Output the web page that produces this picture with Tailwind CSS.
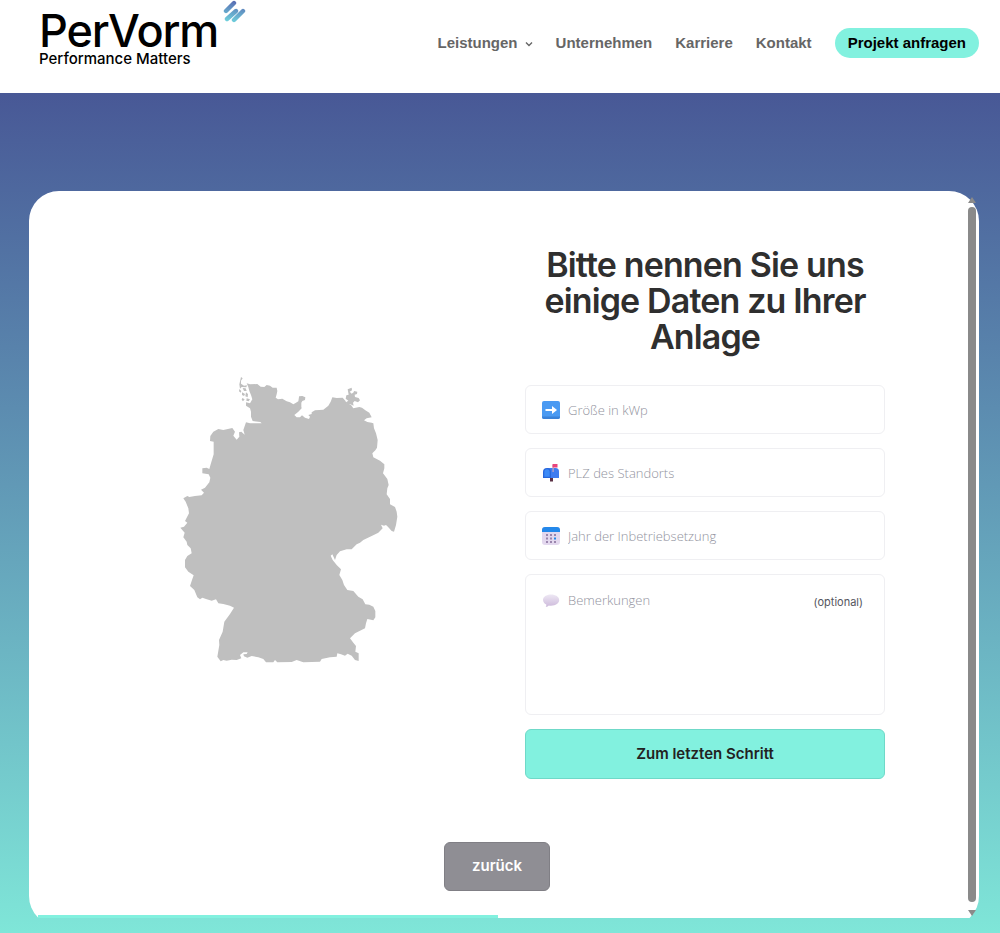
<!DOCTYPE html>
<html lang="de">
<head>
    <meta charset="UTF-8" />
    <meta name="viewport" content="width=device-width, initial-scale=1.0">
    <title>PerVorm - Projekt anfragen</title>
    <script src="https://cdn.jsdelivr.net/npm/@tailwindcss/browser@4"></script>
</head>
<body class="flex min-h-screen flex-col bg-white font-['Inter',sans-serif]">
    <header class="flex h-[93px] items-start justify-between pl-[39px] pr-[21px]">
        <a href="#" class="relative block pt-2 pr-7 text-black">
            <span class="block text-[45px] leading-[46px] font-medium tracking-tight">PerVorm</span>
            <span class="block text-[15px] leading-[10px] font-medium">Performance Matters</span>
            <svg class="absolute top-0 right-0 h-6 w-6" viewBox="0 0 24 24" fill="none" stroke="url(#logoGradient)" stroke-width="4.400" stroke-linecap="round">
                <defs>
                    <linearGradient id="logoGradient" gradientUnits="userSpaceOnUse" x1="14" y1="2" x2="10" y2="22">
                        <stop offset="0" stop-color="#5a6fb4" />
                        <stop offset="1" stop-color="#6fd0dc" />
                    </linearGradient>
                </defs>
                <path d="M4 11 12 3M5 19 14 11M12 20 21 11" />
            </svg>
        </a>
        <nav class="flex h-[86px] items-center gap-[23px] font-['Liberation_Sans',Arial,sans-serif] text-[15px] font-bold text-[#666]">
            <a href="#" class="flex items-center gap-[7px]">
                Leistungen
                <svg class="mt-[2px] h-2 w-2" viewBox="0 0 8 8" fill="none" stroke="currentColor" stroke-width="1.4"><path d="M1 2.5 4 5.5 7 2.5" /></svg>
            </a>
            <a href="#">Unternehmen</a>
            <a href="#">Karriere</a>
            <a href="#">Kontakt</a>
            <a href="#" class="flex h-[30px] items-center rounded-full bg-[#82f1df] px-[13px] text-black">Projekt anfragen</a>
        </nav>
    </header>

    <main class="flex-1 bg-linear-to-b from-[#485896] to-[#7fe6d8] pt-[98px] pr-[21px] pb-[15px] pl-[29px]">
        <div class="relative overflow-hidden">
            <div class="-mb-2 overflow-hidden rounded-[30px] bg-white pt-14 pr-[14px] pb-[35px]">
                <div class="grid grid-cols-2 gap-14 px-20">
                    <div class="flex items-center justify-center">
                        <!-- Deutschlandkarte -->
                        <svg class="mt-3 w-[219px]" viewBox="30 33 657 861" fill="#bfbfbf" role="img" aria-label="Deutschland">
                            <path d="M230 55 240 58 262 57 272 65 283 66 290 60 300 62 308 68 320 68 322 78 320 88 317 98 324 103 337 101 350 109 360 112 370 118 378 113 385 109 387 96
                            393 95 397 93 406 97 405 105 397 108 394 113 394 125 395 130 385 140 373 150 380 157 390 157 396 151 405 158 417 162 420 155 415 150 425 147 425 142 435 136 460 134 475 122 482 110 487 97 500 99 518 98 526 107 530 115 543 120 550 130 568 126 576 128 586 136 598 143 605 157 590 160 582 166 592 171 605 173 610 175
                            612 190 618 205 623 225 621 248 616 256 607 265 610 277 630 287 643 298 643 310 639 325 652 342 656 360 652 370 650 388 660 402 660 418 675 426 680 440
                            682 455 678 480 672 500 665 498 655 487 648 480 642 482 633 479 638 490 625 503 605 513 580 525 570 533 560 538 545 553 530 553 510 559 500 570 495 585 487 568 482 572 488 585 500 600 513 613 508 630 517 645 522 660 532 675 550 678 565 695 578 703 586 718 598 719 610 725 616 738 616 757 610 766 592 762 588 775 585 790 570 797 555 805 540 820 550 833 558 843 556 860 566 865 566 888 555 885 545 872 533 866 525 872 513 868 502 865 500 875 480 877 455 882 450 890 400 892 380 885 365 891 322 892 315 885 310 892 288 892
                            280 882 265 877 245 873 232 878 222 874 220 868 230 867 233 862 220 862 210 870 214 880 200 885 185 884 170 887 160 885 152 889 142 875 148 840 147 825 158 800 163 770 180 747 192 728 180 722 160 717 145 715 138 703 125 707 108 702 97 698 90 703 82 697 73 675 60 663 66 645 71 631 55 620 45 607 45 585 52 573 65 565 62 550 52 540 50 530 40 517 44 503 31 488 42 485 52 473 45 468 57 445
                            55 430 47 410 40 400 52 393 58 396 75 393 95 391 102 383 93 374 105 368 118 352 121 338 116 328 97 325 97 310 110 308 118 312 122 298 131 268 131 230 120 228 121 213 130 200 145 192 160 195 187 189 195 200 190 212 200 224 208 215 207 202 214 200 224 209 220 195 228 172 240 175 275 175 271 171 248 168 243 155 243 140 240 130 228 122 228 112 240 115 247 103 243 90 238 78 235 66Z" />
                            <path d="M387 94 398 93 389 104ZM213 36 218 40 213 47 213 56 222 62 231 61 229 67 215 66 210 71 208 58 211 45ZM208 72 214 78 212 83 207 79ZM218 69 227 70 230 78 222 78ZM216 82 225 87 222 93 216 90ZM228 82 234 87 233 97 226 94ZM217 99 224 103 219 109 215 104ZM230 100 240 103 236 109 229 107Z" />
                            <path d="M533 73 545 68 546 76 539 80 545 86 551 82 552 78 562 80 561 87 554 89 555 96 566 99 570 106 564 112 554 108 549 113 551 122 541 118 533 120 526 113 535 107 527 101 529 91 536 89Z" />
                        </svg>
                    </div>

                    <form class="flex flex-col gap-[14px]">
                        <h1 class="mb-4 text-center text-[34px] leading-[36px] font-semibold tracking-tight text-[#2f2f2f]">Bitte nennen Sie uns einige Daten zu Ihrer Anlage</h1>

                        <div class="relative">
                            <label for="groesse" class="absolute top-4 left-[17px]" aria-label="Größe in kWp">
                                <svg class="h-[18px] w-[18px]" viewBox="0 0 18 18">
                                    <rect width="18" height="18" rx="2" fill="#4a9af2" />
                                    <path d="M0 15.5h18V16a2 2 0 0 1-2 2H2a2 2 0 0 1-2-2Z" fill="#3a82d8" />
                                    <path d="M3.5 8H10V5L15 9 10 13V10H3.5Z" fill="#fff" />
                                </svg>
                            </label>
                            <input id="groesse" type="text" placeholder="Größe in kWp" class="block h-[49px] w-full rounded-md border border-[#efeff2] pr-4 pl-[42px] font-['Open_Sans',sans-serif] text-[13px] font-light placeholder:text-[#92939e]">
                        </div>

                        <div class="relative">
                            <label for="plz" class="absolute top-4 left-[17px]" aria-label="PLZ des Standorts">
                                <svg class="h-[18px] w-[18px]" viewBox="0 0 18 18">
                                    <path d="M8 13h3v4.5H8Z" fill="#5b3044" />
                                    <path d="M5 4h8.500A3.500 3.500 0 0 1 17 7.500V14H5Z" fill="#3f7cf0" />
                                    <path d="M1 8a4 4 0 0 1 8 0v6H1Z" fill="#2867dc" />
                                    <path d="M2.300 8a2.700 2.700 0 0 1 5.400 0v4.800H2.300Z" fill="#3d8bf7" />
                                    <path d="M10.500 1h1.200v7h-1.200Z" fill="#c9a6bd" />
                                    <path d="M10.500 0H15.500V3.500H10.500Z" fill="#e8457c" />
                                </svg>
                            </label>
                            <input id="plz" type="text" placeholder="PLZ des Standorts" class="block h-[49px] w-full rounded-md border border-[#efeff2] pr-4 pl-[42px] font-['Open_Sans',sans-serif] text-[13px] font-light placeholder:text-[#92939e]">
                        </div>

                        <div class="relative">
                            <label for="jahr" class="absolute top-4 left-[17px]" aria-label="Jahr der Inbetriebsetzung">
                                <svg class="h-[18px] w-[18px]" viewBox="0 0 18 18">
                                    <rect width="18" height="18" rx="3" fill="#e3d8ee" />
                                    <path d="M0 5V3a3 3 0 0 1 3-3h12a3 3 0 0 1 3 3v2Z" fill="#2488ea" />
                                    <path d="M4 7h2v2H4ZM8 7h2v2H8ZM12 7h2v2h-2ZM4 10.500h2v2H4ZM8 10.500h2v2H8ZM4 14h2v2H4ZM8 14h2v2H8ZM12 14h2v2h-2Z" fill="#9a85ad" />
                                    <path d="M12 10.500h2v2h-2Z" fill="#2488ea" />
                                </svg>
                            </label>
                            <input id="jahr" type="text" placeholder="Jahr der Inbetriebsetzung" class="block h-[49px] w-full rounded-md border border-[#efeff2] pr-4 pl-[42px] font-['Open_Sans',sans-serif] text-[13px] font-light placeholder:text-[#92939e]">
                        </div>

                        <div class="relative">
                            <label for="bemerkungen" class="absolute top-[18px] left-[17px]" aria-label="Bemerkungen">
                                <svg class="h-[18px] w-[18px]" viewBox="0 0 18 18">
                                    <defs>
                                        <linearGradient id="bubble" x1="0" y1="0" x2="0" y2="1">
                                            <stop offset="0" stop-color="#eee8f4" />
                                            <stop offset="1" stop-color="#cdbadb" />
                                        </linearGradient>
                                    </defs>
                                    <path d="M9 2.500c4.700 0 8.200 2.400 8.200 5.600S13.700 13.800 9 13.800c-.8 0-1.500 0-2.200-.2-.8.8-2 1.400-3.100 1.200.5-.6.7-1.400.6-2.200C2.200 11.600 1 10 1 8.100 1 4.900 4.300 2.500 9 2.500Z" fill="url(#bubble)" />
                                </svg>
                            </label>
                            <textarea id="bemerkungen" placeholder="Bemerkungen" class="block h-[141px] w-full resize-none rounded-md border border-[#efeff2] pt-4 pr-24 pl-[42px] font-['Open_Sans',sans-serif] text-[13px] font-light placeholder:text-[#92939e]"></textarea>
                            <span class="absolute top-5 right-[22px] text-[11px] leading-4 text-[#55565e]">(optional)</span>
                        </div>

                        <button type="submit" class="h-[50px] rounded-md border border-[#6fd9c8] bg-[#82f1df] text-[15px] font-semibold text-[#222]">Zum letzten Schritt</button>
                    </form>
                </div>

                <div class="mt-[63px] flex justify-center">
                    <button type="button" class="h-[49px] w-[106px] rounded-md border border-[#807f85] bg-[#8f8e94] text-[15px] font-semibold text-white">zurück</button>
                </div>

                <!-- Scrollleiste -->
                <div class="absolute top-[6px] right-[3px] bottom-[2px] flex w-2 flex-col items-center" aria-hidden="true">
                    <svg class="h-[6px] w-2" viewBox="0 0 8 6" fill="#8a8a8a"><path d="M4 0 8 6H0Z" /></svg>
                    <div class="my-1 w-2 flex-1 rounded-full bg-[#8a8a8a]"></div>
                    <svg class="mt-1 h-[6px] w-2" viewBox="0 0 8 6" fill="#8a8a8a"><path d="M0 0H8L4 6Z" /></svg>
                </div>
            </div>

            <!-- Fortschritt -->
            <div class="absolute inset-x-0 bottom-0 flex h-[3px] px-[9px]">
                <div class="bg-[#82f1df]" style="width: 49.4%"></div>
            </div>
        </div>
    </main>
</body>
</html>
